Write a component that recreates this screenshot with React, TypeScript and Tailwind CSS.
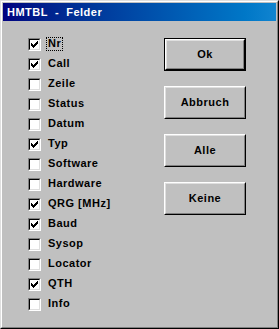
import React from "react";

const items: [string, boolean][] = [
  ["Nr", true],
  ["Call", true],
  ["Zeile", false],
  ["Status", false],
  ["Datum", false],
  ["Typ", true],
  ["Software", false],
  ["Hardware", false],
  ["QRG [MHz]", true],
  ["Baud", true],
  ["Sysop", false],
  ["Locator", false],
  ["QTH", true],
  ["Info", false],
];

const checkPixels: [number, number][] = [
  [6, 0],
  [5, 1], [6, 1],
  [0, 2], [4, 2], [5, 2], [6, 2],
  [0, 3], [1, 3], [3, 3], [4, 3], [5, 3],
  [0, 4], [1, 4], [2, 4], [3, 4], [4, 4],
  [1, 5], [2, 5], [3, 5],
  [2, 6],
];

function Check() {
  return (
    <svg width="7" height="7" viewBox="0 0 7 7" shapeRendering="crispEdges" className="block">
      {checkPixels.map(([x, y], i) => (
        <rect key={i} x={x} y={y} width="1" height="1" fill="#000" />
      ))}
    </svg>
  );
}

function Checkbox({ checked }: { checked: boolean }) {
  return (
    <div className="w-[13px] h-[13px] shrink-0 border border-t-[#808080] border-l-[#808080] border-r-white border-b-white">
      <div className="w-full h-full border border-t-black border-l-black border-r-[#dfdfdf] border-b-[#dfdfdf] bg-white flex items-center justify-center">
        {checked && <Check />}
      </div>
    </div>
  );
}

function Button({ label, isDefault }: { label: string; isDefault?: boolean }) {
  if (isDefault) {
    return (
      <div className="w-[82px] h-[33px] border border-black">
        <div className="w-full h-full border border-t-white border-l-white border-r-black border-b-black">
          <div className="w-full h-full border border-t-[#dfdfdf] border-l-[#dfdfdf] border-r-[#808080] border-b-[#808080] flex items-center justify-center text-[11px] font-bold text-black tracking-[0.5px]">
            {label}
          </div>
        </div>
      </div>
    );
  }
  return (
    <div className="w-[82px] h-[33px] border border-t-white border-l-white border-r-black border-b-black">
      <div className="w-full h-full border border-t-[#dfdfdf] border-l-[#dfdfdf] border-r-[#808080] border-b-[#808080] flex items-center justify-center text-[11px] font-bold text-black tracking-[0.5px]">
        {label}
      </div>
    </div>
  );
}

export default function App() {
  return (
    <div
      className="w-[279px] h-[329px] bg-[#c0c0c0] border border-t-[#dfdfdf] border-l-[#dfdfdf] border-r-black border-b-black"
      style={{ fontFamily: '"Liberation Sans", Arial, sans-serif' }}
    >
      <div className="w-full h-full border border-t-white border-l-white border-r-[#808080] border-b-[#808080] p-px flex flex-col">
        <div className="h-[18px] shrink-0 bg-linear-to-r from-[#000080] to-[#1084d0] flex items-center pl-[4px]">
          <span className="text-white font-bold text-[11px] tracking-[0.5px] whitespace-pre">HMTBL  -  Felder</span>
        </div>
        <div className="flex flex-1 pt-[17px]">
          <div className="flex flex-col gap-[7px] pl-[25px] w-[161px]">
            {items.map(([label, checked], i) => (
              <div key={label} className="flex items-start h-[13px] gap-[7px]">
                <Checkbox checked={checked} />
                {i === 0 ? (
                  <span className="text-[11px] leading-[11px] font-bold text-black tracking-[0.5px] border border-dotted border-black -ml-[2px] px-px -mt-[1px] pb-px">
                    {label}
                  </span>
                ) : (
                  <span className="text-[11px] leading-[11px] font-bold text-black tracking-[0.5px] whitespace-pre">
                    {label}
                  </span>
                )}
              </div>
            ))}
          </div>
          <div className="flex flex-col gap-[15px]">
            <Button label="Ok" isDefault />
            <Button label="Abbruch" />
            <Button label="Alle" />
            <Button label="Keine" />
          </div>
        </div>
      </div>
    </div>
  );
}
